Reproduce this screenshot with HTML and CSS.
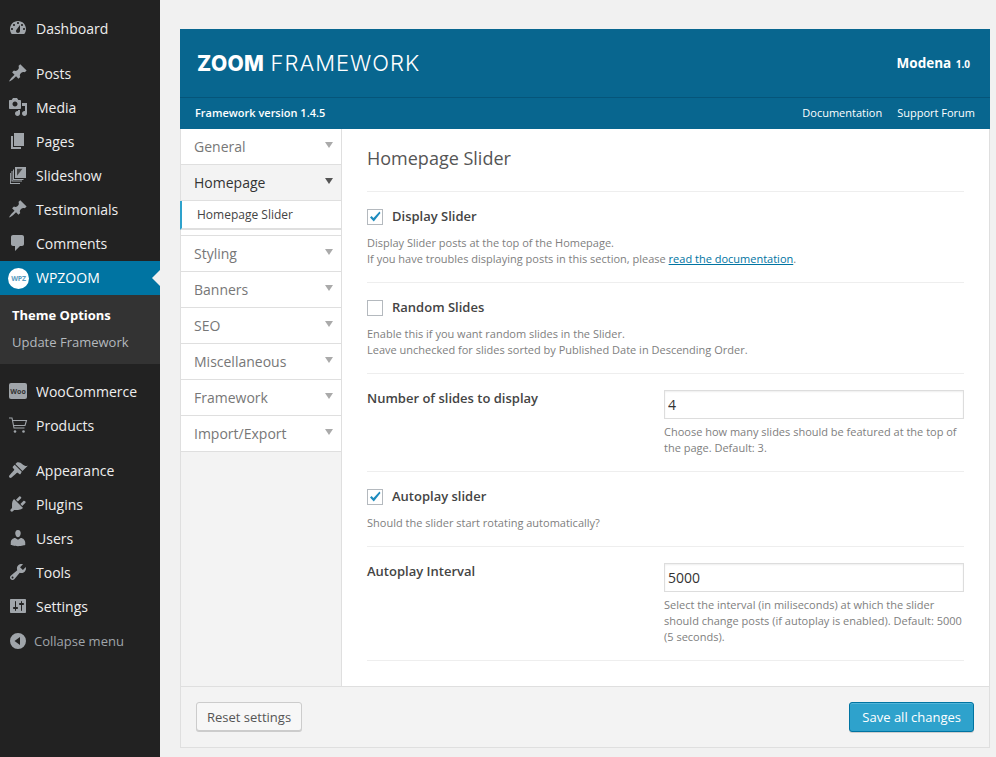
FILE: index.html
```html
<!DOCTYPE html>
<html lang="en">
<head>
<meta charset="utf-8">
<title>ZOOM Framework</title>
<link rel="stylesheet" href="styles.css">
</head>
<body>
<div class="layout">
<nav class="sidebar">
  <ul class="menu">
    <li class="item"><svg class="ico" viewBox="0 0 20 20"><path d="M3.76 16h12.48c1.1-1.37 1.76-3.11 1.76-5 0-4.42-3.58-8-8-8s-8 3.58-8 8c0 1.89.66 3.63 1.76 5zM10 4c.55 0 1 .45 1 1s-.45 1-1 1-1-.45-1-1 .45-1 1-1zM6 6c.55 0 1 .45 1 1s-.45 1-1 1-1-.45-1-1 .45-1 1-1zm8 0c.55 0 1 .45 1 1s-.45 1-1 1-1-.45-1-1 .45-1 1-1zm-5.37 5.55L12 7v6c0 1.1-.9 2-2 2s-2-.9-2-2c0-.57.24-1.08.63-1.45zM4 10c.55 0 1 .45 1 1s-.45 1-1 1-1-.45-1-1 .45-1 1-1zm12 0c.55 0 1 .45 1 1s-.45 1-1 1-1-.45-1-1 .45-1 1-1z"/></svg>Dashboard</li>
    <li class="item sep"><svg class="ico" viewBox="0 0 20 20"><path d="M10.44 3.02l1.82-1.82 6.36 6.35-1.83 1.82c-1.05-.68-2.48-.57-3.41.36l-.75.75c-.92.93-1.04 2.35-.35 3.41l-1.83 1.82-2.41-2.41-2.8 2.79c-.42.42-3.38 2.71-3.8 2.29s1.86-3.39 2.28-3.81l2.79-2.79L4.1 9.36l1.83-1.82c1.05.69 2.48.57 3.4-.36l.75-.75c.93-.92 1.05-2.35.36-3.41z"/></svg>Posts</li>
    <li class="item"><svg class="ico" viewBox="0 0 20 20"><path d="M13 11V4c0-.55-.45-1-1-1h-1.67L9 1H5L3.67 3H2c-.55 0-1 .45-1 1v7c0 .55.45 1 1 1h10c.55 0 1-.45 1-1zM7 4.5c1.38 0 2.5 1.12 2.5 2.5S8.38 9.5 7 9.5 4.5 8.38 4.5 7 5.62 4.5 7 4.5zM14 6h5v10.5c0 1.38-1.12 2.5-2.5 2.5S14 17.88 14 16.5s1.12-2.5 2.5-2.5c.17 0 .34.02.5.05V9h-3V6zm-4 8.05V13h2v3.5c0 1.38-1.12 2.5-2.5 2.5S7 17.88 7 16.5 8.12 14 9.5 14c.17 0 .34.02.5.05z"/></svg>Media</li>
    <li class="item"><svg class="ico" viewBox="0 0 20 20"><path d="M6 15V2h10v13H6zm-1 1h8v2H3V5h2v11z"/></svg>Pages</li>
    <li class="item"><svg class="ico" viewBox="0 0 20 20"><path d="M7 2h11v11H7z"/><path class="ico-dark" d="M9 10.800l5.500-7H9z"/><path d="M5 4.500h1V14h9.500v1H5zM3.500 6h1V15.500h9.500v1H3.500zM2 8h.9v10H12v1H2z"/></svg>Slideshow</li>
    <li class="item"><svg class="ico" viewBox="0 0 20 20"><path d="M10.44 3.02l1.82-1.82 6.36 6.35-1.83 1.82c-1.05-.68-2.48-.57-3.41.36l-.75.75c-.92.93-1.04 2.35-.35 3.41l-1.83 1.82-2.41-2.41-2.8 2.79c-.42.42-3.38 2.71-3.8 2.29s1.86-3.39 2.28-3.81l2.79-2.79L4.1 9.36l1.83-1.82c1.05.69 2.48.57 3.4-.36l.75-.75c.93-.92 1.05-2.35.36-3.41z"/></svg>Testimonials</li>
    <li class="item"><svg class="ico" viewBox="0 0 20 20"><path d="M5 2h9c1.1 0 2 .9 2 2v7c0 1.1-.9 2-2 2h-2l-5 5v-5H5c-1.1 0-2-.9-2-2V4c0-1.1.9-2 2-2z"/></svg>Comments</li>
    <li class="item current"><span class="wpz">WPZ</span>WPZOOM</li>
    <li class="submenu">
      <div class="sub sub-on">Theme Options</div>
      <div class="sub">Update Framework</div>
    </li>
    <li class="item woo"><span class="woo-ico">Woo</span>WooCommerce</li>
    <li class="item"><svg class="ico" viewBox="0 0 20 20"><path class="cart" d="M1 3h3l2 10h10.500M4.500 5.500h14l-1.500 5H5.500"/><circle cx="7" cy="16.500" r="1.300"/><circle cx="15.500" cy="16.500" r="1.300"/></svg>Products</li>
    <li class="item sep"><svg class="ico" viewBox="0 0 20 20"><path d="M14.480 11.060L7.410 3.990l1.500-1.500c.5-.56 2.300-.47 3.510.32 1.210.8 1.430 1.280 2.910 2.100 1.180.64 2.450 1.260 4.450.85zm-.71.71L6.700 4.700 4.930 6.470c-.39.39-.39 1.020 0 1.410l1.060 1.060c.39.39.39 1.030 0 1.420-.6.6-4.600 5.200-4.600 5.200-.6.800-.4 1.500.1 2s1.300.6 2 0c0 0 4.600-4 5.200-4.600.39-.39 1.030-.39 1.420 0l1.060 1.060c.39.39 1.020.39 1.410 0z"/></svg>Appearance</li>
    <li class="item"><svg class="ico" viewBox="0 0 20 20"><path d="M13.110 4.360L9.870 7.600 8 5.730l3.240-3.240c.35-.34 1.050-.2 1.560.32.520.51.660 1.210.310 1.550zm-8 1.770l.91-1.120 9.010 9.010-1.190.84c-.71.71-2.630 1.160-3.820 1.160H6.140L4.900 17.260c-.59.59-1.540.59-2.120 0-.59-.58-.59-1.530 0-2.120l1.240-1.240v-3.880c0-1.130.4-3.190 1.090-3.890zm7.260 3.970l3.240-3.240c.34-.35 1.040-.21 1.550.31.520.51.660 1.210.310 1.550l-3.240 3.250z"/></svg>Plugins</li>
    <li class="item"><svg class="ico" viewBox="0 0 20 20"><path d="M10 9.250c-2.270 0-2.730-3.440-2.730-3.440C7 4.020 7.820 2 9.970 2c2.160 0 2.980 2.020 2.710 3.810 0 0-.41 3.440-2.680 3.440zm0 2.570L12.720 10c2.390 0 4.520 2.330 4.520 4.530v2.490s-3.650 1.130-7.240 1.130c-3.650 0-7.240-1.130-7.240-1.130v-2.490c0-2.250 1.940-4.480 4.470-4.480z"/></svg>Users</li>
    <li class="item"><svg class="ico" viewBox="0 0 20 20"><path d="M16.680 9.770c-1.340 1.340-3.300 1.670-4.950.99l-5.410 6.520c-.99.99-2.590.99-3.580 0s-.99-2.59 0-3.570l6.520-5.420c-.68-1.650-.35-3.610.99-4.950 1.280-1.280 3.120-1.620 4.720-1.060l-2.890 2.890 2.820 2.820 2.860-2.870c.53 1.580.18 3.390-1.080 4.650zM3.810 16.210c.4.39 1.040.39 1.430 0 .4-.4.4-1.040 0-1.430-.39-.4-1.030-.4-1.430 0-.39.39-.39 1.030 0 1.430z"/></svg>Tools</li>
    <li class="item"><svg class="ico" viewBox="0 0 20 20"><path d="M18 16V4c0-.55-.45-1-1-1H3c-.55 0-1 .45-1 1v12c0 .55.45 1 1 1h14c.55 0 1-.45 1-1zM8 11h1c.55 0 1 .45 1 1s-.45 1-1 1H8v1.500c0 .28-.22.5-.5.5s-.5-.22-.5-.5V13H6c-.55 0-1-.45-1-1s.45-1 1-1h1V5.500c0-.28.22-.5.5-.5s.5.22.5.5V11zm5-2h-1c-.55 0-1-.45-1-1s.45-1 1-1h1V5.500c0-.28.22-.5.5-.5s.5.22.5.5V7h1c.55 0 1 .45 1 1s-.45 1-1 1h-1v5.500c0 .28-.22.5-.5.5s-.5-.22-.5-.5V9z"/></svg>Settings</li>
    <li class="item collapse"><svg class="ico" viewBox="0 0 20 20"><path d="M10 2a8 8 0 1 0 0 16 8 8 0 0 0 0-16zm2 4v8L6.500 10z"/></svg>Collapse menu</li>
  </ul>
</nav>

<main class="content">
  <div class="panel">
    <header class="head">
      <div class="brand"><div class="logo"><b>ZOOM</b> <span class="logo-light">FRAMEWORK</span></div><div class="theme">Modena <small>1.0</small></div></div>
      <div class="bar"><strong>Framework version 1.4.5</strong><div class="links"><a>Documentation</a><a>Support Forum</a></div></div>
    </header>
    <div class="body">
      <ul class="tabs">
        <li class="tab">General</li>
        <li class="tab tab-on">Homepage</li>
        <li class="subtab">Homepage Slider</li>
        <li class="tab tab-gap">Styling</li>
        <li class="tab">Banners</li>
        <li class="tab">SEO</li>
        <li class="tab">Miscellaneous</li>
        <li class="tab">Framework</li>
        <li class="tab">Import/Export</li>
      </ul>
      <section class="main">
        <h2 class="title">Homepage Slider</h2>
        <div class="row row-check">
          <div class="check-line"><span class="box"><svg viewBox="0 0 14 14"><path d="M2 7.500l1.500-1.500 2 2 6-6.500 1 1.500-6.700 8.500z"/></svg></span><label class="lab">Display Slider</label></div>
          <p class="desc">Display Slider posts at the top of the Homepage.<br>If you have troubles displaying posts in this section, please <a class="doc">read the documentation</a>.</p>
        </div>
        <div class="row row-check">
          <div class="check-line"><span class="box"></span><label class="lab">Random Slides</label></div>
          <p class="desc">Enable this if you want random slides in the Slider.<br>Leave unchecked for slides sorted by Published Date in Descending Order.</p>
        </div>
        <div class="row row-field">
          <label class="lab">Number of slides to display</label>
          <div class="field"><input class="inp" type="text" value="4"><p class="desc">Choose how many slides should be featured at the top of the page. Default: 3.</p></div>
        </div>
        <div class="row row-check">
          <div class="check-line"><span class="box"><svg viewBox="0 0 14 14"><path d="M2 7.500l1.500-1.500 2 2 6-6.500 1 1.500-6.700 8.500z"/></svg></span><label class="lab">Autoplay slider</label></div>
          <p class="desc">Should the slider start rotating automatically?</p>
        </div>
        <div class="row row-field">
          <label class="lab">Autoplay Interval</label>
          <div class="field"><input class="inp" type="text" value="5000"><p class="desc">Select the interval (in miliseconds) at which the slider should change posts (if autoplay is enabled). Default: 5000 (5 seconds).</p></div>
        </div>
      </section>
    </div>
    <footer class="foot">
      <button class="btn">Reset settings</button>
      <button class="btn btn-primary">Save all changes</button>
    </footer>
  </div>
</main>
</div>
</body>
</html>
```
FILE: styles.css
```css
* { box-sizing: border-box; }
html, body { margin: 0; padding: 0; }
body { background: #f1f1f1; font-family: "Open Sans", sans-serif; color: #444; overflow: hidden; }
ul { list-style: none; margin: 0; padding: 0; }
.layout { display: flex; height: 757px; }

.sidebar { width: 160px; flex: none; background: #222; padding-top: 11px; }
.item { height: 34px; display: flex; align-items: center; padding-left: 7px; font-size: 14px; color: #eee; position: relative; white-space: nowrap; }
.sep { margin-top: 11px; }
.ico { width: 20px; height: 20px; margin-right: 8px; fill: #a0a5aa; flex: none; margin-left: 1px; }
.ico .ico-dark { fill: #444; }
.cart { fill: none; stroke: #a0a5aa; stroke-width: 1.1; }
.current { background: #0074a2; color: #fff; margin-top: 1px; padding-bottom: 2px; }
.current::after { content: ""; position: absolute; right: 0; top: 9px; border: 8px solid transparent; border-right-color: #f1f1f1; border-left: 0; }
.wpz { width: 21px; height: 21px; margin: 2px 7px 0 1px; border-radius: 50%; background: #fff; color: #5a9cc0; font-size: 7px; font-weight: 700; display: flex; align-items: center; justify-content: center; letter-spacing: -.2px; }
.submenu { background: #333; height: 69px; padding-top: 6px; }
.sub { height: 27px; display: flex; align-items: center; padding-left: 12px; font-size: 13px; color: #b4b9be; }
.sub-on { color: #fff; font-weight: 700; }
.woo { margin-top: 10px; }
.woo-ico { width: 18px; height: 16px; margin: 0 9px 0 2px; border-radius: 2px; background: #a0a5aa; color: #333; font-size: 7px; font-weight: 700; display: flex; align-items: center; justify-content: center; }
.collapse { color: #a0a5aa; font-size: 13px; margin-top: 1px; }
.collapse .ico { margin-right: 6px; }

.content { flex: 1; padding: 29px 6px 9px 20px; min-width: 0; }
.panel { height: 719px; display: flex; flex-direction: column; border: 1px solid #dfdfdf; border-top: 0; background: #f3f3f3; }
.head { background: #08668f; color: #fff; margin: 0 -1px; }
.brand { height: 68px; display: flex; justify-content: space-between; align-items: center; padding: 0 20px 0 17px; }
.logo { font-family: Inter, sans-serif; font-size: 21px; font-weight: 300; letter-spacing: .35px; }
.logo b { font-weight: 800; }
.logo-light { font-size: 22px; letter-spacing: 1px; }
.theme { font-size: 13.5px; font-weight: 700; }
.theme small { font-size: 10px; margin-left: 1px; }
.bar { height: 32px; border-top: 1px solid #05557a; display: flex; justify-content: space-between; align-items: center; padding: 0 15px 2px; font-size: 11px; }
.bar strong { font-weight: 600; }
.links { display: flex; gap: 15px; }

.body { flex: 1; display: flex; min-height: 0; }
.tabs { width: 161px; flex: none; border-right: 1px solid #dfdfdf; }
.tab { height: 36px; padding: 0 0 0 13px; display: flex; align-items: center; font-size: 14px; color: #777; background: #fff; border-bottom: 1px solid #dfdfdf; position: relative; }
.tab::after { content: ""; position: absolute; right: 8px; top: 13px; border: 4px solid transparent; border-top: 6px solid #aaa; border-bottom: 0; }
.tab-on { background: #f3f3f3; color: #333; }
.tab-on::after { border-top-color: #555; }
.subtab { height: 29px; margin-left: -1px; background: #fff; border-left: 2px solid #2ea2cc; border-bottom: 2px solid #dfdfdf; padding-left: 15px; font-size: 12px; color: #444; display: flex; align-items: center; }
.tab-gap { height: 42px; padding-top: 6px; background: linear-gradient(#fff 5px, #dfdfdf 5px, #dfdfdf 6px, #fff 6px); }
.tab-gap::after { top: 19px; }

.main { flex: 1; background: #fff; padding: 0 25px; }
.title { margin: 0; height: 62px; padding-top: 16px; font-size: 18px; font-weight: 400; color: #555; line-height: 26px; }
.row { border-top: 1px solid #eee; }
.row:last-child { border-bottom: 1px solid #eee; }
.row-check { padding-top: 17px; }
.row:nth-of-type(1) { height: 91px; }
.row:nth-of-type(2) { height: 91px; }
.row:nth-of-type(3) { height: 98px; }
.row:nth-of-type(4) { height: 75px; }
.row:nth-of-type(5) { height: 115px; }
.check-line { display: flex; align-items: center; height: 16px; }
.check-line .lab { margin-top: -2px; }
.box { width: 16px; height: 16px; border: 1px solid #b4b9be; background: #fff; margin-right: 9px; flex: none; display: block; }
.box svg { display: block; width: 14px; height: 14px; fill: #1e8cbe; }
.lab { font-size: 13px; font-weight: 600; color: #444; }
.desc { margin: 0; font-size: 11px; line-height: 16px; color: #808080; }
.row-check .desc { margin-top: 10px; }
.doc { color: #0074a2; text-decoration: underline; }
.row-field { display: flex; padding-top: 16px; }
.row-field .lab { width: 297px; flex: none; line-height: 18px; margin-top: -1px; }
.field { flex: 1; }
.inp { display: block; width: 100%; height: 29px; border: 1px solid #ddd; background: #fff; font: 14px "Open Sans", sans-serif; color: #333; padding: 0 3px 1px; box-shadow: inset 0 1px 2px rgba(0,0,0,.07); margin-bottom: 5px; }

.foot { height: 61px; flex: none; border-top: 1px solid #dfdfdf; display: flex; justify-content: space-between; align-items: flex-start; padding: 15px 15px 0; }
.btn { height: 29px; padding: 0 10px; border: 1px solid #ccc; border-radius: 3px; background: #f7f7f7; color: #555; font: 13px "Open Sans", sans-serif; box-shadow: 0 1px 0 #ccc; }
.btn-primary { height: 30px; padding: 0 12px; background: #2ea2cc; border-color: #0074a2; color: #fff; box-shadow: inset 0 1px 0 rgba(120,200,230,.5), 0 1px 0 rgba(0,0,0,.15); }
```
